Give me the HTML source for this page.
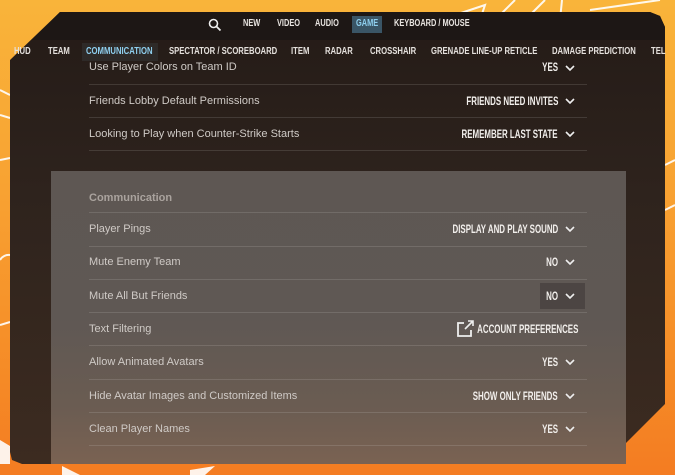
<!DOCTYPE html>
<html><head><style>
*{margin:0;padding:0;box-sizing:border-box}
body{width:675px;height:475px;overflow:hidden;position:relative;font-family:"Liberation Sans",sans-serif;background:linear-gradient(180deg,#f9b43a 0%,#f8a232 40%,#f58a26 80%,#f47c22 100%)}
.panel{position:absolute;left:10px;top:12px;width:655px;height:452px;background:linear-gradient(180deg,#241b17 0%,#2e231d 40%,#3c2b20 100%);clip-path:polygon(50px 0,640px 0,650px 4px,655px 15px,655px 392px,595px 452px,12px 452px,2px 448px,0 440px,0 48px)}
.top{position:absolute;left:10px;top:12px;width:655px;height:28px;background:#1d1715;clip-path:polygon(50px 0,640px 0,650px 4px,655px 15px,655px 28px,22px 28px)}
.nav{position:absolute;top:18px;font:bold 10px "Liberation Sans",sans-serif;color:#e8e4e0;transform:scaleX(.74);transform-origin:left}
.sub{position:absolute;top:46px;font:bold 10px "Liberation Sans",sans-serif;color:#e4e0dc;white-space:nowrap;transform:scaleX(.77);transform-origin:left}
.inner{position:absolute;left:51px;top:171px;width:575px;height:293px;background:linear-gradient(180deg,#5e5753 0%,#5f5854 50%,#6a5c52 80%,#7a6252 100%)}
.lbl{position:absolute;left:89px;font-size:11px;color:#cfcac6}
.val{position:absolute;right:117px;font:bold 12px "Liberation Sans",sans-serif;color:#f2efec;white-space:nowrap;transform:scaleX(.66);transform-origin:right}
.chev{position:absolute;left:565px;width:10px;height:7px}
.line{position:absolute;left:89px;width:498px;height:1px;background:rgba(255,255,255,.12)}
</style></head><body>
<svg style="position:absolute;left:0;top:0" width="675" height="475">
<g stroke="#fff" stroke-width="2" fill="none" opacity=".9">
<path d="M440 20 L485 5 L480 20"/><path d="M495 20 L515 0"/><path d="M525 20 L545 0"/><path d="M560 20 L562 0"/><path d="M590 10 L660 0"/>
<path d="M0 90 L10 95"/><path d="M0 115 L10 118"/><path d="M0 160 L10 158"/><path d="M0 260 A10 10 0 0 1 10 255"/><path d="M0 325 L10 322"/>
<path d="M665 165 L675 160"/><path d="M665 210 L675 205"/>
</g>
<g fill="#fff" opacity=".9"><path d="M0 440 L10 446 L10 464 L0 464Z"/><path d="M62 466 L80 475 L62 475Z"/><path d="M190 470 L215 466 L205 475 L190 475Z"/></g>
</svg>
<div class="panel"></div>
<div class="top"></div>
<svg style="position:absolute;left:208px;top:18px" width="14" height="14"><circle cx="5.5" cy="5.5" r="4" stroke="#eee" stroke-width="1.6" fill="none"/><path d="M8.5 8.5 L12.5 12.5" stroke="#eee" stroke-width="1.8"/></svg>
<div class="nav" style="left:243px">NEW</div>
<div class="nav" style="left:277px">VIDEO</div>
<div class="nav" style="left:315px">AUDIO</div>
<div style="position:absolute;left:352px;top:16px;width:30px;height:17px;background:#3a5566"></div>
<div class="nav" style="left:356px;color:#8fd0f0">GAME</div>
<div class="nav" style="left:394px">KEYBOARD / MOUSE</div>
<div style="position:absolute;left:82px;top:43px;width:76px;height:18px;background:#2e2a28"></div>
<div class="sub" style="left:14px">HUD</div>
<div class="sub" style="left:48px">TEAM</div>
<div class="sub" style="left:86px;color:#8fd0f0">COMMUNICATION</div>
<div class="sub" style="left:169px">SPECTATOR / SCOREBOARD</div>
<div class="sub" style="left:291px">ITEM</div>
<div class="sub" style="left:325px">RADAR</div>
<div class="sub" style="left:370px">CROSSHAIR</div>
<div class="sub" style="left:431px">GRENADE LINE-UP RETICLE</div>
<div class="sub" style="left:552px">DAMAGE PREDICTION</div>
<div class="sub" style="left:651px">TEL</div>
<div class="inner"></div>
<div style="position:absolute;left:540px;top:283px;width:45px;height:26px;background:rgba(60,55,52,.55)"></div>

<div class="lbl" style="top:61px">Use Player Colors on Team ID</div><div class="val" style="top:60px">YES</div><svg class="chev" style="top:65px" viewBox="0 0 10 7"><path d="M1 1 L5 5 L9 1" stroke="#eee" stroke-width="1.6" fill="none"/></svg>
<div class="line" style="top:84px"></div>
<div class="lbl" style="top:95px">Friends Lobby Default Permissions</div><div class="val" style="top:94px">FRIENDS NEED INVITES</div><svg class="chev" style="top:98px" viewBox="0 0 10 7"><path d="M1 1 L5 5 L9 1" stroke="#eee" stroke-width="1.6" fill="none"/></svg>
<div class="line" style="top:117px"></div>
<div class="lbl" style="top:128px">Looking to Play when Counter-Strike Starts</div><div class="val" style="top:127px">REMEMBER LAST STATE</div><svg class="chev" style="top:131px" viewBox="0 0 10 7"><path d="M1 1 L5 5 L9 1" stroke="#eee" stroke-width="1.6" fill="none"/></svg>
<div class="line" style="top:150px"></div>

<div class="lbl" style="top:192px;font-weight:bold;color:#aaa39e">Communication</div>
<div class="line" style="top:212px"></div>
<div class="lbl" style="top:223px">Player Pings</div><div class="val" style="top:222px">DISPLAY AND PLAY SOUND</div><svg class="chev" style="top:226px" viewBox="0 0 10 7"><path d="M1 1 L5 5 L9 1" stroke="#eee" stroke-width="1.6" fill="none"/></svg>
<div class="line" style="top:246px"></div>
<div class="lbl" style="top:256px">Mute Enemy Team</div><div class="val" style="top:255px">NO</div><svg class="chev" style="top:259px" viewBox="0 0 10 7"><path d="M1 1 L5 5 L9 1" stroke="#eee" stroke-width="1.6" fill="none"/></svg>
<div class="line" style="top:279px"></div>
<div class="lbl" style="top:290px">Mute All But Friends</div><div class="val" style="top:289px">NO</div><svg class="chev" style="top:293px" viewBox="0 0 10 7"><path d="M1 1 L5 5 L9 1" stroke="#eee" stroke-width="1.6" fill="none"/></svg>
<div class="line" style="top:312px"></div>
<div class="lbl" style="top:323px">Text Filtering</div>
<svg style="position:absolute;left:456px;top:320px" width="19" height="18"><path d="M8 3 H2 V16 H15 V10" stroke="#eee" stroke-width="1.8" fill="none"/><path d="M9 9 L17 1 M12 1 H17 V6" stroke="#eee" stroke-width="1.6" fill="none"/></svg>
<div class="val" style="top:322px;right:97px">ACCOUNT PREFERENCES</div>
<div class="line" style="top:345px"></div>
<div class="lbl" style="top:356px">Allow Animated Avatars</div><div class="val" style="top:355px">YES</div><svg class="chev" style="top:359px" viewBox="0 0 10 7"><path d="M1 1 L5 5 L9 1" stroke="#eee" stroke-width="1.6" fill="none"/></svg>
<div class="line" style="top:379px"></div>
<div class="lbl" style="top:390px">Hide Avatar Images and Customized Items</div><div class="val" style="top:389px">SHOW ONLY FRIENDS</div><svg class="chev" style="top:393px" viewBox="0 0 10 7"><path d="M1 1 L5 5 L9 1" stroke="#eee" stroke-width="1.6" fill="none"/></svg>
<div class="line" style="top:412px"></div>
<div class="lbl" style="top:423px">Clean Player Names</div><div class="val" style="top:422px">YES</div><svg class="chev" style="top:426px" viewBox="0 0 10 7"><path d="M1 1 L5 5 L9 1" stroke="#eee" stroke-width="1.6" fill="none"/></svg>
<div class="line" style="top:445px"></div>
</body></html>
